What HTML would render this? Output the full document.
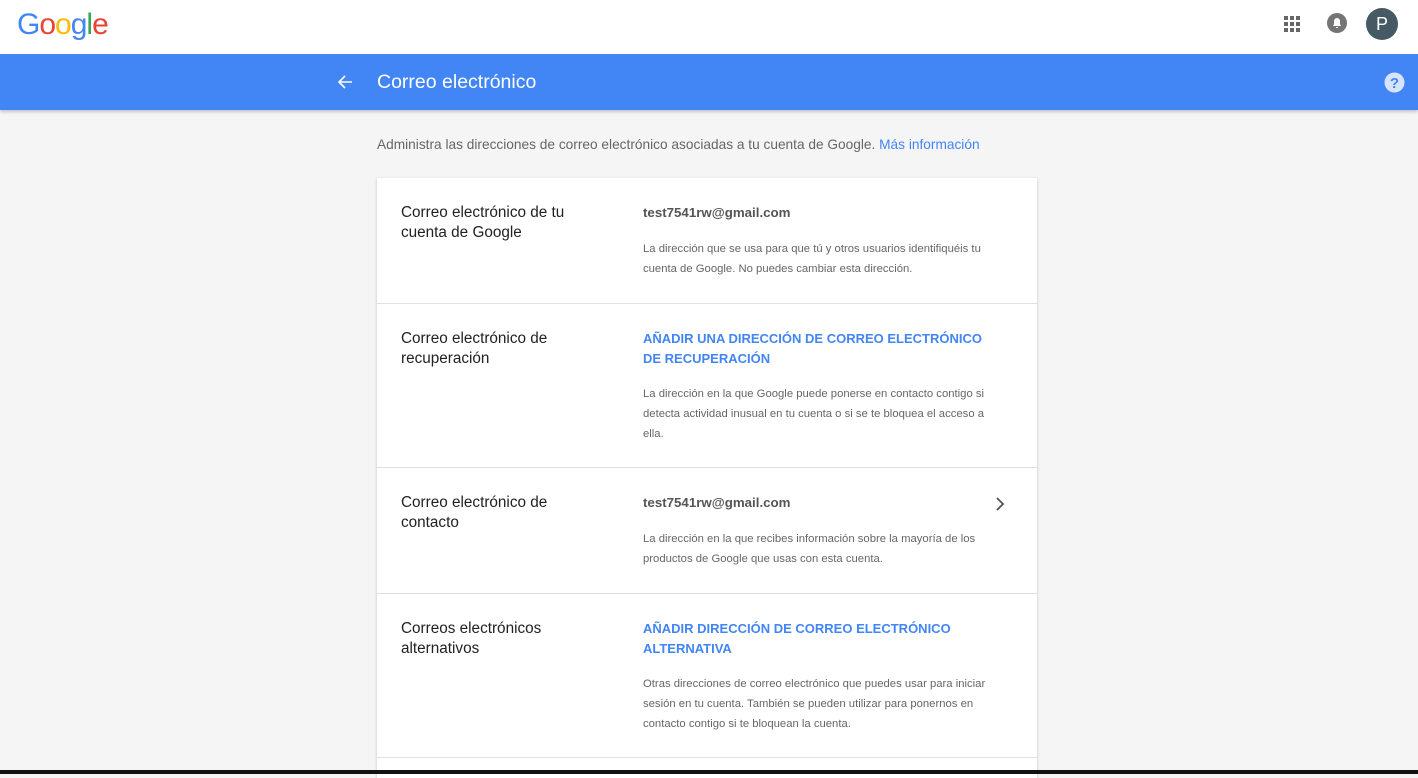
<!DOCTYPE html><html><head><meta charset="utf-8"><style>
*{margin:0;padding:0;box-sizing:border-box}
body{width:1418px;height:774px;overflow:hidden;background:#f5f5f5;font-family:"Liberation Sans",sans-serif;position:relative}
.top{position:absolute;left:0;top:0;width:1418px;height:54px;background:#fff}
.logo{position:absolute;left:17px;top:8px;font-size:30px;letter-spacing:-1px}
.bar{position:absolute;left:0;top:54px;width:1418px;height:56px;background:#4285f4;box-shadow:0 2px 3px rgba(0,0,0,.2)}
.bar .t{position:absolute;left:377px;top:17px;color:#fff;font-size:19.5px}
.intro{position:absolute;left:377px;top:137px;font-size:13.7px;color:#666}
.intro a{color:#4285f4;text-decoration:none}
.card{position:absolute;left:377px;top:178px;width:660px;height:600px;background:#fff;box-shadow:0 1px 3px rgba(0,0,0,.2)}
.row{position:absolute;left:0;width:660px;border-bottom:1px solid #e0e0e0}
.l{position:absolute;left:24px;top:25px;font-size:15.3px;color:#222;line-height:20px;width:200px}
.v{position:absolute;left:266px;top:27px;font-size:13.3px;color:#555;font-weight:bold}
.b{position:absolute;left:266px;font-size:13px;color:#4285f4;font-weight:bold;line-height:20px;width:360px}
.d{position:absolute;left:266px;font-size:11.3px;color:#666;line-height:20px;width:345px}
.black{position:absolute;left:0;top:770px;width:1418px;height:4px;background:#111}
</style></head><body>
<div class="top"><div class="logo"><span style="color:#4285f4">G</span><span style="color:#ea4335">o</span><span style="color:#fbbc05">o</span><span style="color:#4285f4">g</span><span style="color:#34a853">l</span><span style="color:#ea4335">e</span></div>
<svg style="position:absolute;left:1284px;top:16px" width="16" height="16"><g fill="#666"><rect x="0" y="0" width="4" height="4"/><rect x="6" y="0" width="4" height="4"/><rect x="12" y="0" width="4" height="4"/><rect x="0" y="6" width="4" height="4"/><rect x="6" y="6" width="4" height="4"/><rect x="12" y="6" width="4" height="4"/><rect x="0" y="12" width="4" height="4"/><rect x="6" y="12" width="4" height="4"/><rect x="12" y="12" width="4" height="4"/></g></svg>
<svg style="position:absolute;left:1327px;top:13px" width="20" height="20"><circle cx="10" cy="10" r="10" fill="#757575"/><path d="M6 13h8l-1-2V8a3 3 0 0 0-6 0v3z M9 14h2v1h-2z" fill="#fff"/></svg>
<div style="position:absolute;left:1366px;top:8px;width:32px;height:32px;border-radius:50%;background:#455a64;color:#fff;font-size:18px;text-align:center;line-height:32px">P</div></div>
<div class="bar"><svg style="position:absolute;left:336px;top:19px" width="18" height="18"><path d="M16 9H3M9 3L3 9l6 6" stroke="#fff" stroke-width="1.6" fill="none"/></svg><div class="t">Correo electrónico</div>
<svg style="position:absolute;left:1384px;top:18px" width="21" height="21"><circle cx="10.5" cy="10.5" r="10" fill="#d6e4fd"/><text x="10.5" y="16" text-anchor="middle" font-size="15" font-weight="bold" fill="#4285f4" font-family="Liberation Sans">?</text></svg></div>
<div class="intro">Administra las direcciones de correo electrónico asociadas a tu cuenta de Google. <a>Más información</a></div>
<div class="card">
<div class="row" style="top:0;height:126px"><div class="l">Correo electrónico de tu cuenta de Google</div><div class="v">test7541rw@gmail.com</div><div class="d" style="top:61px">La dirección que se usa para que tú y otros usuarios identifiquéis tu cuenta de Google. No puedes cambiar esta dirección.</div></div>
<div class="row" style="top:126px;height:164px"><div class="l">Correo electrónico de recuperación</div><div class="b" style="top:25px">AÑADIR UNA DIRECCIÓN DE CORREO ELECTRÓNICO DE RECUPERACIÓN</div><div class="d" style="top:80px">La dirección en la que Google puede ponerse en contacto contigo si detecta actividad inusual en tu cuenta o si se te bloquea el acceso a ella.</div></div>
<div class="row" style="top:290px;height:126px"><div class="l">Correo electrónico de contacto</div><div class="v">test7541rw@gmail.com</div><svg style="position:absolute;left:618px;top:29px" width="10" height="14"><path d="M2 1l6 6-6 6" stroke="#555" stroke-width="1.8" fill="none"/></svg><div class="d" style="top:61px">La dirección en la que recibes información sobre la mayoría de los productos de Google que usas con esta cuenta.</div></div>
<div class="row" style="top:416px;height:164px"><div class="l">Correos electrónicos alternativos</div><div class="b" style="top:25px">AÑADIR DIRECCIÓN DE CORREO ELECTRÓNICO ALTERNATIVA</div><div class="d" style="top:80px">Otras direcciones de correo electrónico que puedes usar para iniciar sesión en tu cuenta. También se pueden utilizar para ponernos en contacto contigo si te bloquean la cuenta.</div></div>
</div>
<div class="black"></div>
</body></html>
